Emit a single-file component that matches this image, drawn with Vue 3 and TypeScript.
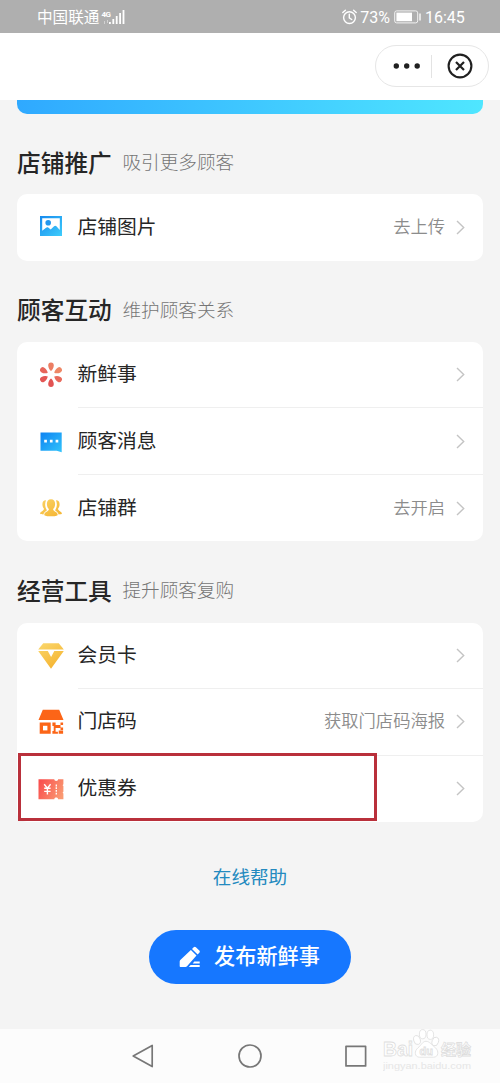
<script setup lang="ts">
interface Row {
  icon: 'image' | 'flower' | 'chat' | 'group' | 'diamond' | 'store' | 'coupon'
  label: string
  action?: string
  marked?: boolean
}
interface Section {
  title: string
  hint: string
  rows: Row[]
}

const sections: Section[] = [
  { title: '店铺推广', hint: '吸引更多顾客', rows: [{ icon: 'image', label: '店铺图片', action: '去上传' }] },
  {
    title: '顾客互动',
    hint: '维护顾客关系',
    rows: [
      { icon: 'flower', label: '新鲜事' },
      { icon: 'chat', label: '顾客消息' },
      { icon: 'group', label: '店铺群', action: '去开启' },
    ],
  },
  {
    title: '经营工具',
    hint: '提升顾客复购',
    rows: [
      { icon: 'diamond', label: '会员卡' },
      { icon: 'store', label: '门店码', action: '获取门店码海报' },
      { icon: 'coupon', label: '优惠券', marked: true },
    ],
  },
]
const petals = [
  { angle: 0, color: '#ec7e63' },
  { angle: 60, color: '#ee8766' },
  { angle: 120, color: '#e86a5c' },
  { angle: 180, color: '#e25353' },
  { angle: 240, color: '#e35755' },
  { angle: 300, color: '#e7665b' },
]
</script>

<template>
  <div class="screen">
    <svg class="defs" width="0" height="0" aria-hidden="true">
      <defs>
        <linearGradient id="blue" x1="0" y1="0" x2="1" y2="1">
          <stop offset="0" stop-color="#1689ee" /><stop offset="1" stop-color="#3fcdfb" />
        </linearGradient>
        <linearGradient id="chatBlue" x1="0" y1="0" x2="1" y2="1">
          <stop offset="0" stop-color="#0d83f2" /><stop offset="1" stop-color="#33c4fb" />
        </linearGradient>
        <linearGradient id="gold" gradientUnits="userSpaceOnUse" x1="6" y1="2" x2="20" y2="26">
          <stop offset="0" stop-color="#fad467" /><stop offset="1" stop-color="#f5b32f" />
        </linearGradient>
        <linearGradient id="ticket" x1="0" y1="0.3" x2="1" y2="0.7">
          <stop offset="0" stop-color="#f9504f" /><stop offset="1" stop-color="#fa9a72" />
        </linearGradient>
      </defs>
    </svg>

    <header class="status">
      <span class="carrier">中国联通</span>
      <span class="net">
        <span class="gen">4G</span>
        <svg class="arrows" width="6" height="4" viewBox="0 0 6 4"><path d="M1.5 4V1M4.5 0v3" stroke="#d2d2d2" stroke-width="1" /></svg>
      </span>
      <svg class="signal" width="17" height="16" viewBox="0 0 17 16" fill="#fff">
        <rect x="0" y="13" width="1.8" height="2" /><rect x="3.4" y="10" width="1.8" height="5" />
        <rect x="6.8" y="7" width="1.8" height="8" /><rect x="10.2" y="4" width="1.8" height="11" />
        <rect x="13.6" y="1" width="1.8" height="14" />
      </svg>
      <span class="spacer"></span>
      <svg class="alarm" width="15" height="16" viewBox="0 0 15 16" fill="none" stroke="#fff" stroke-width="1.4" stroke-linecap="round">
        <circle cx="7.5" cy="8.6" r="5.9" /><path d="M7.3 5.2v3.7l2.4 1.6M.8 3.6 3.4 1.2M14.2 3.6 11.6 1.2" />
      </svg>
      <span class="percent">73%</span>
      <svg class="battery" width="28" height="14" viewBox="0 0 28 14">
        <rect x=".7" y=".9" width="23" height="12" rx="2" fill="none" stroke="#f2f2f2" />
        <rect x="2.4" y="2.6" width="15.6" height="8.6" fill="#fff" /><path d="M26 3.5v7" stroke="#f2f2f2" stroke-width="1.6" />
      </svg>
      <span class="clock">16:45</span>
    </header>

    <div class="navbar">
      <div class="capsule">
        <svg width="28" height="8" viewBox="0 0 28 8" fill="#202020">
          <circle cx="3.3" cy="4" r="2.7" /><circle cx="13.7" cy="4" r="2.7" /><circle cx="24.2" cy="4" r="2.7" />
        </svg>
        <span class="split"></span>
        <svg width="26" height="26" viewBox="0 0 26 26" fill="none" stroke="#202020">
          <circle cx="13" cy="13" r="11.4" stroke-width="2.1" /><path d="m9 9 8 8m0-8-8 8" stroke-width="2.2" />
        </svg>
      </div>
    </div>

    <main class="content">
      <div class="banner"></div>
      <section v-for="s in sections" :key="s.title" class="section">
        <div class="heading"><h2>{{ s.title }}</h2><span>{{ s.hint }}</span></div>
        <div class="card">
          <div v-for="r in s.rows" :key="r.label" class="row">
            <svg class="icon" width="28" height="28" viewBox="0 0 28 28">
              <template v-if="r.icon === 'image'">
                <rect x="3" y="3" width="22" height="20" fill="url(#blue)" />
                <path d="M5.200 5.200h17.600v11.700l-3.400-3.700c-.8-.7-1.500-.7-2.300.1l-3.400 3.200-2.500-2c-.8-.5-1.500-.4-2.100.2l-3.900 3z" fill="#fff" />
                <circle cx="11.2" cy="9.800" r="2.8" fill="#2497ee" />
              </template>
              <g v-else-if="r.icon === 'flower'">
                <path v-for="p in petals" :key="p.angle" :transform="`rotate(${p.angle} 14 13.7)`" :fill="p.color" d="M14 9.900c-1-.6-2.800-2.900-2.800-5.500a2.800 2.900 0 0 1 5.600 0c0 2.600-1.800 4.900-2.800 5.500z" />
              </g>
              <template v-else-if="r.icon === 'chat'">
                <path d="M3.500 4.500h21.200v19.800l-5-1.600H3.500z" fill="url(#chatBlue)" />
                <path d="M7.200 11.800h2.700v2.700H7.200zM12.900 11.800h2.700v2.700h-2.700zM18.600 11.800h2.700v2.700h-2.700z" fill="#fff" />
              </template>
              <g v-else-if="r.icon === 'group'" fill="url(#gold)">
                <path d="M9 6.200c-2.200-.2-3.700 1.600-3.600 4.200.1 2 .8 3.500 1.600 4.300 0 2.200-3.900 2.600-3.900 4.800 0 .7 1.600.9 3.300.9.400-2 2.400-3.100 3.600-4.200-1.900-2.600-2.500-6.300-1-10zM19 6.200c2.200-.2 3.700 1.600 3.600 4.200-.1 2-.8 3.500-1.600 4.300 0 2.200 3.900 2.600 3.900 4.800 0 .7-1.600.9-3.300.9-.4-2-2.400-3.100-3.600-4.200 1.900-2.600 2.500-6.300 1-10z" />
                <path d="M14 5.200c-2.900 0-4.300 2.200-4.100 5 .1 2.300.9 3.900 2 4.900 0 2.700-4.600 2.600-4.600 5.800 0 1.800 13.400 1.800 13.400 0 0-3.200-4.600-3.100-4.600-5.800 1.100-1 1.900-2.600 2-4.900.2-2.800-1.200-5-4.100-5z" />
              </g>
              <g v-else-if="r.icon === 'diamond'" fill="url(#gold)">
                <path d="M6.200 1.200h15.600l5 6.400H1.200z" /><path d="M1.200 9h9.600l3.300 6 3.200-6h9.500L14 26.800z" />
              </g>
              <template v-else-if="r.icon === 'store'">
                <path d="M5.800 1.700h16.400L26.500 12H1.500zM2.700 14.500h11v11.200h-11z" fill="#fc6517" />
                <path d="M6 17.800h4.400v4.600H6z" fill="#fff" />
                <path d="M15.400 14.500h3.200v2.600h2.300v3h-2.300v3.600h2.300v2h-5.500v-2.600h1.300v-5.200h-1.300zM23.500 14.500h2.600v2.600h-2.600zM20.900 17.100h2.600v3h-2.600zM23.500 19.500h2.600V22h-2.600zM21.700 22.600h4.400v3.100h-4.400z" fill="#fc6517" />
              </template>
              <template v-else>
                <path d="M1.500 4.300h15.800c0 1.100.8 1.700 1.900 1.700s1.900-.6 1.900-1.700h5.300v5l-.8.900.8.900v5.600l-.8.900.8.900v5.700h-5.300c0-1.100-.8-1.700-1.900-1.700s-1.900.6-1.900 1.700H1.500z" fill="url(#ticket)" />
                <path d="m7.200 9.300 3.200 3.800 3.200-3.800M10.400 13v6.600M7.200 13.300h6.400M7.200 16.400h6.400" fill="none" stroke="#fff" stroke-width="1.400" />
                <path d="M19.300 9.600v10" stroke="#fff" stroke-width="1.300" stroke-dasharray="1.800 .9" />
              </template>
            </svg>
            <div class="body">
              <span class="label">{{ r.label }}</span>
              <span v-if="r.action" class="action">{{ r.action }}</span>
              <svg class="chevron" width="9" height="15" viewBox="0 0 9 15" fill="none" stroke="#c4c4c4" stroke-width="1.4"><path d="m1 1 6.700 6.500L1 14" /></svg>
            </div>
            <div v-if="r.marked" class="mark"></div>
          </div>
        </div>
      </section>

      <a class="help">在线帮助</a>
      <button class="publish">
        <svg width="22" height="22" viewBox="0 0 22 22" fill="#fff">
          <path d="m13 2.900 1.700-1.700c.7-.7 1.500-.7 2.200 0l3.400 3.400c.7.700.7 1.500 0 2.200l-1.700 1.700z" />
          <path d="m11.900 4 5.600 5.600L8 20.300c-.4.500-.9.700-1.500.7H1.800c-.7 0-1.100-.4-1.100-1.100v-4.400c0-.6.2-1 .6-1.400z" />
          <path d="M15.300 15.600h5.400v1.900h-7zM11.600 19.100h9.100V21H9.800z" />
        </svg>
        <span>发布新鲜事</span>
      </button>
    </main>

    <footer class="system">
      <svg class="keys" width="270" height="26" viewBox="0 0 270 26" fill="none" stroke="#777" stroke-width="1.7" stroke-linejoin="round">
        <path d="M34.200 2.400v21.200L15.200 13z" /><circle cx="132" cy="13" r="11" /><rect x="228" y="3.3" width="19.6" height="19.6" />
      </svg>
      <div class="watermark">
        <svg width="92" height="42" viewBox="0 0 92 42" fill="#fff" stroke="#dedede" stroke-width=".8">
          <ellipse cx="34" cy="11" rx="3.3" ry="4.6" transform="rotate(-15 34 11)" /><ellipse cx="39.700" cy="5.200" rx="3.3" ry="4.6" />
          <ellipse cx="47.3" cy="5.8" rx="3.3" ry="4.6" /><ellipse cx="52.3" cy="12.5" rx="3.2" ry="4.4" transform="rotate(18 52.3 12.5)" />
          <path d="M43 12.300c-3.500 0-4.700 4-8 6.500-4 3.200-3.500 9.400 1.500 9.400h14c5.200 0 5.500-6.200 2-9.400-3.300-2.500-6-6.500-9.500-6.500z" />
          <text class="wm-latin" x="0" y="27" textLength="30" lengthAdjust="spacingAndGlyphs">Bai</text>
          <text class="wm-du" x="36.5" y="26">du</text>
          <text class="wm-cn" x="58" y="26">经验</text>
          <text class="wm-url" x="0" y="39.5" textLength="88" lengthAdjust="spacingAndGlyphs">jingyan.baidu.com</text>
        </svg>
      </div>
    </footer>
  </div>
</template>

<style>
body { margin: 0; }
</style>

<style scoped>
.screen {
  width: 500px;
  height: 1083px;
  overflow: hidden;
  display: flex;
  flex-direction: column;
  background: #f4f4f4;
  color: #262626;
  font-family: "Noto Sans CJK SC", sans-serif;
}
.defs { position: absolute; }
.status {
  height: 33px;
  flex: none;
  box-sizing: border-box;
  padding: 0 35px 0 37px;
  display: flex;
  align-items: center;
  background: #afafaf;
  color: #fff;
}
.carrier { font-size: 15.6px; line-height: 33px; }
.net { display: flex; flex-direction: column; align-items: center; gap: 1px; width: 9px; margin-left: 2px; }
.gen { font: 700 8px/9px Roboto, sans-serif; letter-spacing: -0.5px; }
.signal { margin-left: -1px; }
.spacer { flex: 1; }
.alarm { margin-right: 2px; }
.percent { font: 16px/33px Roboto, sans-serif; margin: 1px 4px 0 1px; }
.battery { margin-right: 3px; }
.clock { font: 16px/33px Roboto, sans-serif; margin-top: 1px; width: 40px; }
.navbar {
  height: 67px;
  flex: none;
  box-sizing: border-box;
  padding-right: 11px;
  display: flex;
  align-items: center;
  justify-content: flex-end;
  background: #fff;
}
.capsule {
  box-sizing: border-box;
  width: 114px;
  height: 42px;
  padding: 0 15px 0 17px;
  border: 1px solid #e6e6e6;
  border-radius: 21px;
  display: flex;
  align-items: center;
  margin-top: -1px;
}
.split { width: 1px; height: 23px; background: #e3e3e3; margin: 0 15px 0 10px; }
.content {
  height: 929px;
  flex: none;
  box-sizing: border-box;
  padding: 0 17px;
  display: flex;
  flex-direction: column;
  align-items: center;
}
.banner {
  width: 100%;
  height: 14px;
  flex: none;
  margin-bottom: -1px;
  border-radius: 0 0 10px 10px;
  background: linear-gradient(90deg, #2fa9ff, #4fe6ff);
}
.section { width: 100%; }
.heading { display: flex; align-items: center; height: 81.2px; }
.heading h2 { margin: 16px 0 0; font-size: 23.7px; line-height: 34px; font-weight: 500; width: 105.5px; white-space: nowrap; }
.heading span { margin-top: 15px; font-size: 18.6px; line-height: 28px; font-weight: 300; color: #757575; }
.card { background: #fff; border-radius: 10px; }
.row { position: relative; height: 66.5px; display: flex; align-items: center; padding-left: 19.5px; }
.icon { flex: none; margin-right: 13px; }
.body { flex: 1; height: 100%; box-sizing: border-box; display: flex; align-items: center; padding-right: 18px; }
.row:not(:last-child) .body { border-bottom: 1px solid #efefef; }
.label { flex: 1; font-size: 19.8px; line-height: 28px; margin-top: -3px; }
.action { font-size: 17.3px; line-height: 26px; font-weight: 350; color: #8c8c8c; margin: -3px 11px 0 0; }
.mark {
  position: absolute;
  left: 1px;
  top: -3px;
  width: 359px;
  height: 68px;
  box-sizing: border-box;
  border: 3px solid #b9303b;
}
.help { margin-top: 40px; font-size: 18.6px; line-height: 28px; color: #248abf; }
.publish {
  margin: 39.5px 0 0;
  width: 202px;
  height: 54px;
  padding: 0 1px 0 0;
  border: 0;
  border-radius: 27px;
  background: #1677ff;
  color: #fff;
  display: flex;
  align-items: center;
  justify-content: center;
  gap: 13px;
  font: 500 21.2px/30px "Noto Sans CJK SC", sans-serif;
}
.publish span { margin-top: -3px; }
.system { flex: 1; display: flex; align-items: flex-start; background: #fcfcfc; }
.keys { margin: 14px 0 0 118px; flex: none; }
.watermark { margin: 0 0 0 -5px; height: 42px; }
.wm-latin { font: 700 20px/1 "Liberation Sans", sans-serif; }
.wm-du { font: 700 11px/1 "Liberation Sans", sans-serif; }
.wm-cn { font: 700 15px/1 "Noto Sans CJK SC", sans-serif; }
.wm-url { font: 9px/1 "Liberation Sans", sans-serif; fill: #e6e6e6; stroke: none; }
</style>
